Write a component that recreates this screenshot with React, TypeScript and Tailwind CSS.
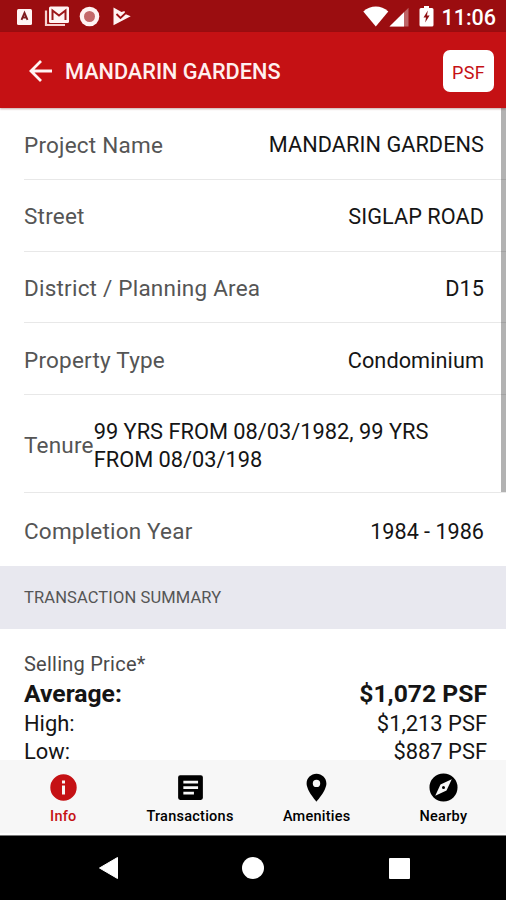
import type { ReactNode } from 'react'

// ─── Data ─────────────────────────────────────────────────────────────────────

const details = [
  { label: 'Project Name', value: 'MANDARIN GARDENS' },
  { label: 'Street', value: 'SIGLAP ROAD' },
  { label: 'District / Planning Area', value: 'D15' },
  { label: 'Property Type', value: 'Condominium' },
]

const tabs = [
  { label: 'Info', icon: <InfoIcon />, active: true },
  { label: 'Transactions', icon: <ArticleIcon /> },
  { label: 'Amenities', icon: <PinIcon /> },
  { label: 'Nearby', icon: <CompassIcon /> },
]

// ─── Icons ────────────────────────────────────────────────────────────────────

function TabIcon({ children }: { children: ReactNode }) {
  return (
    <svg className="size-[33px] shrink-0" viewBox="0 0 24 24" fill="currentColor" fillRule="evenodd">
      {children}
    </svg>
  )
}

function InfoIcon() {
  return (
    <TabIcon>
      <path d="M12 2.4a9.6 9.6 0 1 0 0 19.2a9.6 9.6 0 0 0 0-19.2zM10.900 6.900h2.200v2.200h-2.200zM10.900 10.500h2.200v6.500h-2.200z" />
    </TabIcon>
  )
}

function ArticleIcon() {
  return (
    <TabIcon>
      <path d="M4.500 3h15a1.500 1.500 0 0 1 1.500 1.500v15a1.500 1.500 0 0 1-1.500 1.500h-15A1.500 1.500 0 0 1 3 19.500v-15A1.500 1.500 0 0 1 4.500 3zM6.800 7v2h10.700V7zM6.800 11v2h10.700v-2zM6.800 15v2h7.700v-2z" />
    </TabIcon>
  )
}

function PinIcon() {
  return (
    <TabIcon>
      <path d="M12 2C8.1 2 4.800 5.1 4.800 9c0 5.25 7.200 13.200 7.200 13.200s7.200-7.950 7.200-13.200c0-3.9-3.300-7-7.200-7zm0 9.700a2.700 2.700 0 1 1 0-5.400a2.700 2.700 0 0 1 0 5.400z" />
    </TabIcon>
  )
}

function CompassIcon() {
  return (
    <TabIcon>
      <path d="M12 1.800a10.200 10.200 0 1 0 0 20.400a10.200 10.200 0 0 0 0-20.400zM14.200 14.200L6 18l3.800-8.200L18 6zM12 10.900a1.100 1.100 0 1 0 0 2.200a1.100 1.100 0 0 0 0-2.200z" />
    </TabIcon>
  )
}

function NotificationIcons() {
  return (
    <svg className="h-8 w-[140px]" viewBox="0 0 140 32" fill="#fff4f3">
      {/* keyboard app */}
      <rect x="17" y="9" width="15" height="16" rx="1.5" />
      <path d="M21.500 19.800l3-7 3 7M22.700 17.500h3.600" fill="none" stroke="#7d1a1c" strokeWidth="1.900" />
      {/* mail stack */}
      <path d="M46 10.500v14.500h19" fill="none" stroke="#f6d3d1" strokeWidth="2.200" />
      <rect x="49" y="6.500" width="20" height="16.500" rx="1.500" />
      <path d="M52.500 20V10.500l6.500 5 6.500-5V20" fill="none" stroke="#9c1719" strokeWidth="2" />
      {/* record */}
      <circle cx="89.500" cy="16.500" r="9.800" />
      <circle cx="89.500" cy="16.500" r="5.500" fill="#c4696a" />
      {/* play store check */}
      <path d="M113.500 7.500l8 4.500 3-1 .8 3 5.400 2.300-17.200 9z" />
      <path d="M116.500 14l4 4 8.500-8" fill="none" stroke="#9c1013" strokeWidth="1.800" />
    </svg>
  )
}

function SystemIcons() {
  return (
    <svg className="h-8 w-[76px]" viewBox="0 0 76 32" fill="#fff">
      <path d="M2.300 11.500C9.500 4.900 20.100 4.900 27.300 11.500L14.800 26.500z" />
      <path d="M28.500 26.500L47.500 7.800v18.700z" fill="#bd6466" />
      <path d="M28.500 26.500L43 12.300v14.200z" />
      <path d="M60 8h3V6h5v2h3a1.500 1.500 0 0 1 1.500 1.500V25a1.500 1.500 0 0 1-1.500 1.500h-11A1.500 1.500 0 0 1 58.500 25V9.500A1.500 1.500 0 0 1 60 8z" />
      <path d="M66.800 10.500l-4.300 7h2.500l-.8 5 4.400-7h-2.600z" fill="#8f1114" />
    </svg>
  )
}

// ─── Rows ─────────────────────────────────────────────────────────────────────

function DetailRow({ label, value }: { label: string; value: string }) {
  return (
    <div className="ml-6 flex h-[71.800px] items-center justify-between border-b border-[#e8e8e8] pt-[4px] pr-[22px]">
      <span className="text-[22.500px] tracking-[0.220px] text-[#555]">{label}</span>
      <span className="text-[21.700px] tracking-[0.060px] text-[#151515]">{value}</span>
    </div>
  )
}

// ─── Screen ───────────────────────────────────────────────────────────────────

export default function App() {
  return (
    <div className="flex h-[900px] w-[506px] flex-col overflow-hidden bg-white font-['Roboto',sans-serif] whitespace-nowrap">
      {/* Status bar */}
      <div className="flex h-8 shrink-0 items-center bg-[#9b0d10] text-white">
        <NotificationIcons />
        <div className="ml-auto flex items-center pr-[10px]">
          <SystemIcons />
          <span className="ml-[4px] pt-[3px] text-[21.500px] leading-none font-medium">11:06</span>
        </div>
      </div>

      {/* Header */}
      <header className="z-10 flex h-[76px] shrink-0 items-center bg-[#c51114] pr-3 pl-[29px] text-white shadow-[0_1px_2px_rgba(90,0,0,0.35)]">
        <svg className="mt-px h-[22px] w-[23px]" viewBox="0 0 23 22" fill="none" stroke="#fff4f3" strokeWidth="2.800">
          <path d="M12 1L2 11l10 10M2 11h21" />
        </svg>
        <h1 className="ml-[13px] pt-[5px] text-[21.700px] font-medium text-[#fff0ef]">MANDARIN GARDENS</h1>
        <button className="mt-px ml-auto h-[42px] w-[51px] rounded-[7px] bg-white pt-[3px] text-[18px] tracking-[0.300px] text-[#c51114]">
          PSF
        </button>
      </header>

      {/* Scrolling content */}
      <main className="relative min-h-0 flex-1 overflow-hidden">
        {details.map((d) => (
          <DetailRow key={d.label} label={d.label} value={d.value} />
        ))}
        <div className="ml-6 flex h-[98.300px] items-center border-b border-[#e8e8e8] pt-[4px]">
          <span className="text-[22.500px] tracking-[0.200px] text-[#555]">Tenure</span>
          <span className="text-[21.800px] leading-7 text-[#151515]">
            99 YRS FROM 08/03/1982, 99 YRS
            <br />
            FROM 08/03/198
          </span>
        </div>
        <div className="ml-6 flex h-[72.500px] items-center justify-between pt-[4px] pr-[22px]">
          <span className="text-[22.500px] tracking-[0.200px] text-[#555]">Completion Year</span>
          <span className="text-[21.600px] text-[#151515]">1984 - 1986</span>
        </div>

        <div className="flex h-[63px] items-center bg-[#e8e8ef] pt-[2px] pl-6 text-[16.500px] tracking-[0.120px] text-[#555]">
          TRANSACTION SUMMARY
        </div>

        <section className="pt-[22px] pr-[19px] pl-6 text-[#151515]">
          <div className="text-[20px] leading-[27px] tracking-[0.240px] text-[#4a4a4a]">Selling Price*</div>
          <div className="flex justify-between text-[24.700px] leading-8 font-bold">
            <span>Average:</span>
            <span>$1,072 PSF</span>
          </div>
          <div className="flex justify-between text-[21.900px] leading-7">
            <span>High:</span>
            <span>$1,213 PSF</span>
          </div>
          <div className="flex justify-between text-[21.900px] leading-7">
            <span>Low:</span>
            <span>$887 PSF</span>
          </div>
        </section>

        {/* Scroll thumb */}
        <div className="absolute top-0 right-0 h-[384px] w-[5px] bg-black/30" />
      </main>

      {/* Tabs */}
      <nav className="flex h-[73px] shrink-0 bg-[#f7f7f7]">
        {tabs.map((tab) => (
          <div
            key={tab.label}
            className={`flex w-[126.700px] shrink-0 flex-col items-center pt-[11px] ${tab.active ? 'text-[#c51114]' : 'text-black'}`}
          >
            {tab.icon}
            <span className="mt-[4px] text-[14.500px] leading-[18px] font-medium tracking-[0.250px]">{tab.label}</span>
          </div>
        ))}
      </nav>

      {/* System navigation */}
      <div className="h-[2px] shrink-0 bg-white" />
      <div className="flex h-[65px] shrink-0 items-center justify-between border-t border-[#777] bg-black pr-24 pl-[98px]">
        <svg className="h-6 w-[21px]" viewBox="0 0 21 24" fill="#fff">
          <path d="M19.500 1.500v21L1.500 12z" stroke="#fff" strokeLinejoin="round" />
        </svg>
        <div className="mr-[2px] size-[22px] rounded-full bg-white" />
        <div className="size-[21px] rounded-[1px] bg-white" />
      </div>
    </div>
  )
}
